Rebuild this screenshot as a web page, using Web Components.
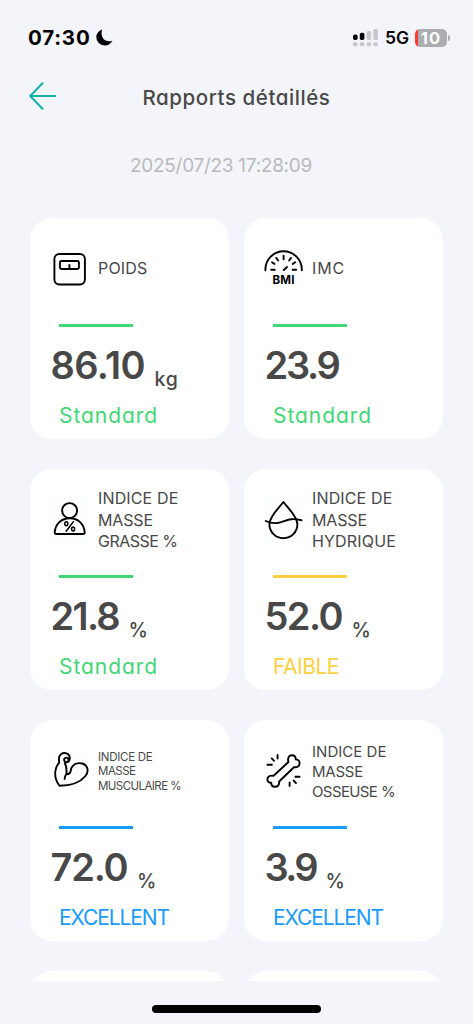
<!DOCTYPE html>
<html lang="fr">
<head>
<meta charset="utf-8">
<title>Rapports détaillés</title>
<style>
  body { margin: 0; background: #f4f5fa; }
</style>
</head>
<body>
<report-app></report-app>

<script>
// One line of text, tracked so that it fills the given width
customElements.define('text-run', class extends HTMLElement {
  connectedCallback () {
    const shadow = this.attachShadow({ mode: 'open' })
    shadow.innerHTML = `
    <style>
      :host { display: block; white-space: nowrap; }
      span { display: inline-block; }
    </style>
    <span><slot></slot></span>
    `
    const span = shadow.querySelector('span')
    const width = Number(this.getAttribute('width'))
    if (!width) return
    const gap = (width - span.getBoundingClientRect().width) / this.textContent.length
    span.style.letterSpacing = gap.toFixed(3) + 'px'
  }
})

customElements.define('status-bar', class extends HTMLElement {
  constructor () {
    super()
    this.attachShadow({ mode: 'open' }).innerHTML = `
    <style>
      :host { display: flex; align-items: center; height: 75px; padding: 0 26px 0 28px; color: #000; box-sizing: border-box; }
      .time { font-size: 20.5px; font-weight: 700; }
      .moon { margin-left: 5.5px; }
      .signal { margin-left: auto; }
      .net { margin-left: 7px; font-size: 17.5px; font-weight: 600; }
      .battery { position: relative; margin-left: 6px; width: 32px; height: 18px; border-radius: 5px;
        background: linear-gradient(90deg, #ff3830 0 3.5px, #acadb1 3.5px); color: #fff;
        font-size: 16.5px; font-weight: 700; line-height: 18px; display: flex; justify-content: center; }
      .battery::after { content: ''; position: absolute; left: 33px; top: 6px; width: 2px; height: 6px; border-radius: 0 2px 2px 0; background: #acadb1; }
    </style>
    <text-run class="time" width="62.5">07:30</text-run>
    <svg class="moon" width="17" height="17" viewBox="0 0 17 17"><path d="M6.200.4C3 1.500.3 4.400.3 8.200a8.200 8.200 0 0 0 8.300 8.300c3.600 0 6.600-2 7.900-5.100-1.200.7-2.500 1-3.900.9C8.700 12 6.200 9.500 5.700 5.600 5.400 3.500 5.600 1.900 6.200.4z"/></svg>
    <svg class="signal" width="25" height="18" viewBox="0 0 25 18">
      <rect x="0" y="5.5" width="4.6" height="5.5" rx="1.8"/>
      <rect x="6.8" y="3.8" width="4.6" height="7.2" rx="1.8"/>
      <g fill="#c6c7cb">
        <rect x="13.6" y="2" width="4.6" height="9" rx="1.5"/>
        <rect x="20.3" y="0" width="4.6" height="11" rx="1.5"/>
        <rect x="0" y="13.2" width="4.6" height="4" rx="1.5"/>
        <rect x="6.8" y="13.2" width="4.6" height="4" rx="1.5"/>
        <rect x="13.6" y="13.2" width="4.6" height="4" rx="1.5"/>
        <rect x="20.3" y="13.2" width="4.6" height="4" rx="1.5"/>
      </g>
    </svg>
    <text-run class="net" width="24">5G</text-run>
    <div class="battery"><text-run width="20.5">10</text-run></div>
    `
  }
})

customElements.define('page-header', class extends HTMLElement {
  constructor () {
    super()
    this.attachShadow({ mode: 'open' }).innerHTML = `
    <style>
      :host { display: grid; grid-template-columns: 114px 1fr; align-items: center; height: 45px; padding-left: 28.5px; }
      svg { display: block; margin-bottom: 4px; }
      .title { font-size: 20.5px; font-weight: 500; }
    </style>
    <svg width="27" height="28" viewBox="0 0 27 28" fill="none" stroke="#12b3a8" stroke-width="2.1" stroke-linecap="round" stroke-linejoin="round"><path d="M26 14H1.200M13.500 1.300 1.200 14l12.300 12.700"/></svg>
    <div class="title"><slot></slot></div>
    `
  }
})

const icons = {
  scale: `<rect x="7" y="7" width="30.5" height="30.5" rx="5"/><rect x="12.5" y="14" width="19" height="8" rx="1.5"/><path d="M22 18v4"/>`,
  bmi: `<path d="M4 23.300V22.500a18.200 18.200 0 0 1 36.400 0v.8"/>
    <path d="M9.800 22.700h3.600M31.200 22.700h3.600M22.200 8.800v3.400M10.600 15.200l2.400 1.700M14.800 10.900l1.900 2.600M29.600 10.900l-1.900 2.600M33.800 15.200l-2.400 1.700M22.400 23l3.200-3"/>
    <text x="11" y="37" textLength="22" font-size="11.5" font-weight="700" fill="#000" stroke="none">BMI</text>`,
  fat: `<circle cx="22.2" cy="12.6" r="7.5"/><path d="M9 36c-1.200 0-1.800-.6-1.700-1.800C8 26 14 20.200 22.300 20.200S36.700 26 37.300 34.200c.1 1.200-.5 1.800-1.700 1.800z"/>
    <g stroke-width="1.5"><ellipse cx="18.9" cy="25.7" rx="1.5" ry="2"/><ellipse cx="25.7" cy="31" rx="1.5" ry="2"/><path d="M26 23.600l-7.200 9.700"/></g>`,
  water: `<path d="M22 4C17 10.500 8 18.500 8 26.200a14 14 0 0 0 28 0C36 18.500 27 10.500 22 4z"/><path d="M4.300 23C8 24.700 12 25.400 16 25c5-.5 9-3.500 14-3.800 3.500-.2 7 .3 10.200 1"/>`,
  muscle: `<path d="M19 13.200c-2-.3-2.800-2-2-3.500.9-1.600 3.300-1.400 3.900.3.600 2-.8 3.500-3 3.600M21 12.800c2.600-3.200 1.500-8-2.800-8.700-3.700-.5-6.400 2-6.700 5l.3 4.600C6.500 20 6.300 29 12 36.700c12 0 21-3.500 26-9.700 4-5 2.200-11-3.200-12.500-4.300-1-8.500.5-10.800 4.500-.7 1.800-.4 3.500-1.500 5-.8.9-2 1.300-3.400 1.300M17.400 14c1.500 3 2 6 1.700 10.500-1.200 2-1.800 3.500-1.900 5.500"/>`,
  bone: `<path d="M27 13 12.200 26.800C8.500 26 6 27.800 6 30.300c0 2 1.600 3.500 3.800 3.500 0 2.500 1.500 4 3.700 4 3 0 4.700-2.200 4.200-5.300L32.500 18.200c3.300.6 5.700-1.200 5.700-3.900 0-2.200-1.500-3.700-3.800-3.900 0-2.500-1.700-4.200-3.900-4.200-3 0-4.500 3-3.500 6.800z"/>
    <path d="M16.200 6v3.500M10.300 9.400l2.200 2.300M6 15.800h4.500M28.200 33.500v3.600M32.300 31.600l2.200 2.400M34 27.800h4.200"/>`
}

customElements.define('metric-icon', class extends HTMLElement {
  constructor () {
    super()
    this.attachShadow({ mode: 'open' }).innerHTML = `
    <style>
      :host { display: block; width: 44px; height: 44px; background: #fdfefe; }
      svg { display: block; }
    </style>
    <svg width="44" height="44" viewBox="-0.4 0 44 44" fill="none" stroke="#000" stroke-width="1.9" stroke-linecap="round" stroke-linejoin="round">${icons[this.getAttribute('name')] || ''}</svg>
    `
  }
})

customElements.define('metric-card', class extends HTMLElement {
  constructor () {
    super()
    const icon = this.getAttribute('icon')
    this.attachShadow({ mode: 'open' }).innerHTML = `
    <style>
      :host { display: block; height: 221px; border-radius: 22px; background: #fff; padding: 12px 0 0 17px; box-sizing: border-box; --tone: #43d676; }
      :host([level=low]) { --tone: #fbcf42; }
      :host([level=high]) { --tone: #1a9bff; }
      .head { display: flex; align-items: center; gap: 7px; height: 78px; }
      .label { font-size: var(--label, 16px); line-height: var(--leading, 21.5px); padding-top: 1px; }
      .bar { width: 74px; height: 3px; margin: 16px 0 0 12px; background: var(--tone); }
      .value { display: flex; align-items: flex-end; height: 40px; margin-top: 18px; margin-left: 3.5px; }
      .number { font-size: 38px; font-weight: 600; line-height: 40px; }
      .unit { font-size: 19.5px; font-weight: 500; line-height: 20px; margin: 0 0 -4px 9.5px; }
      .status { margin: 19px 0 0 12px; font-size: 21px; line-height: 24px; color: var(--tone); }
    </style>
    ${icon ? `
    <div class="head">
      <metric-icon name="${icon}"></metric-icon>
      <div class="label"><slot name="label"></slot></div>
    </div>
    <div class="bar"></div>
    <div class="value">
      <div class="number"><slot name="number"></slot></div>
      <div class="unit"><slot name="unit"></slot></div>
    </div>
    <div class="status"><slot name="status"></slot></div>
    ` : ''}
    `
  }
})

customElements.define('report-app', class extends HTMLElement {
  constructor () {
    super()
    this.attachShadow({ mode: 'open' }).innerHTML = `
    <style>
      :host { display: flex; flex-direction: column; width: 473px; height: 1024px; overflow: hidden; background: #f4f5fa; color: #484848;
        font-family: Inter, "Liberation Sans", sans-serif; font-feature-settings: "cv11"; }
      .date { height: 91px; padding-left: 130px; display: flex; align-items: center; font-size: 19px; color: #b9b9ba; }
      .cards { display: grid; grid-template-columns: 199px 199px; grid-auto-rows: 221px; gap: 30.3px 15px; align-content: start;
        height: 770px; box-sizing: border-box; padding: 6.6px 0 0 30px; overflow: hidden; }
      .home { width: 169px; height: 8px; border-radius: 4px; background: #000; margin: 24px auto 0; }
      .small { --label: 11.5px; --leading: 14.7px; }
      .medium { --label: 15px; --leading: 20px; }
    </style>
    <status-bar></status-bar>
    <page-header><text-run width="188">Rapports détaillés</text-run></page-header>
    <div class="date"><text-run width="182">2025/07/23 17:28:09</text-run></div>
    <div class="cards">
      <metric-card icon="scale">
        <text-run slot="label" width="49.5">POIDS</text-run>
        <text-run slot="number" width="94.5">86.10</text-run>
        <text-run slot="unit" width="24">kg</text-run>
        <text-run slot="status" width="99">Standard</text-run>
      </metric-card>
      <metric-card icon="bmi">
        <text-run slot="label" width="33">IMC</text-run>
        <text-run slot="number" width="74">23.9</text-run>
        <text-run slot="status" width="99">Standard</text-run>
      </metric-card>
      <metric-card icon="fat">
        <text-run slot="label" width="80.5">INDICE DE</text-run>
        <text-run slot="label" width="55">MASSE</text-run>
        <text-run slot="label" width="79.5">GRASSE %</text-run>
        <text-run slot="number" width="68.5">21.8</text-run>
        <text-run slot="unit" width="17">%</text-run>
        <text-run slot="status" width="99">Standard</text-run>
      </metric-card>
      <metric-card icon="water" level="low">
        <text-run slot="label" width="80.5">INDICE DE</text-run>
        <text-run slot="label" width="55">MASSE</text-run>
        <text-run slot="label" width="84">HYDRIQUE</text-run>
        <text-run slot="number" width="77.5">52.0</text-run>
        <text-run slot="unit" width="17">%</text-run>
        <text-run slot="status" width="66">FAIBLE</text-run>
      </metric-card>
      <metric-card class="small" icon="muscle" level="high">
        <text-run slot="label" width="54.5">INDICE DE</text-run>
        <text-run slot="label" width="37.5">MASSE</text-run>
        <text-run slot="label" width="83">MUSCULAIRE %</text-run>
        <text-run slot="number" width="77">72.0</text-run>
        <text-run slot="unit" width="17">%</text-run>
        <text-run slot="status" width="110">EXCELLENT</text-run>
      </metric-card>
      <metric-card class="medium" icon="bone" level="high">
        <text-run slot="label" width="74.5">INDICE DE</text-run>
        <text-run slot="label" width="51">MASSE</text-run>
        <text-run slot="label" width="83">OSSEUSE %</text-run>
        <text-run slot="number" width="51.5">3.9</text-run>
        <text-run slot="unit" width="17">%</text-run>
        <text-run slot="status" width="110">EXCELLENT</text-run>
      </metric-card>
      <metric-card></metric-card>
      <metric-card></metric-card>
    </div>
    <div class="home"></div>
    `
  }
})
</script>
</body>
</html>
